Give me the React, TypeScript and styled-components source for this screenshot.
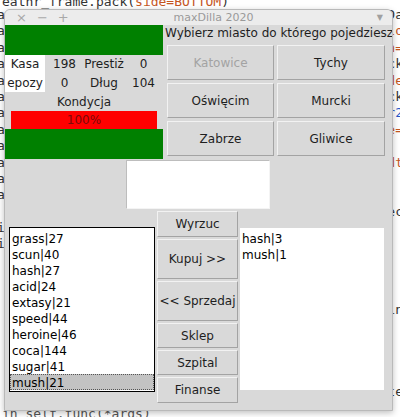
import styled, { createGlobalStyle } from "styled-components";

const GlobalStyle = createGlobalStyle`
  html, body {
    margin: 0;
    padding: 0;
    background: #ffffff;
  }
  body {
    font-family: "DejaVu Sans", "Liberation Sans", sans-serif;
  }
`;

const drugs = [
  "grass|27",
  "scun|40",
  "hash|27",
  "acid|24",
  "extasy|21",
  "speed|44",
  "heroine|46",
  "coca|144",
  "sugar|41",
  "mush|21",
];

const owned = ["hash|3", "mush|1"];

const cities = [
  { name: "Katowice", disabled: true },
  { name: "Tychy" },
  { name: "Oświęcim" },
  { name: "Murcki" },
  { name: "Zabrze" },
  { name: "Gliwice" },
];

// tekst edytora za oknem: [lewy fragment, prawy fragment, kolor prawego]
const editorLines: [string, string, string][] = [
  ["a", "Da", "#333"],
  ["a", "lo", "#c5561f"],
  ["a", "n=", "#c5561f"],
  ["a", "ck", "#333"],
  ["a", "de", "#c5561f"],
  ["a", "ck", "#333"],
  ["a", "r2", "#2456c7"],
  ["a", "e=", "#c5561f"],
  ["a", "", "#333"],
  ["a", "dt", "#c5561f"],
  ["a", "", "#333"],
  ["a", "", "#333"],
  ["", "ec", "#333"],
  ["i", "", "#333"],
  ["i", "", "#333"],
  ["", "", "#333"],
  ["", "", "#333"],
  ["", "", "#333"],
  ["", "in", "#333"],
  ["", "", "#333"],
  ["", "", "#333"],
  ["", "", "#333"],
  ["", "", "#333"],
  ["", "te", "#333"],
];

const App = () => {
  return (
    <>
      <GlobalStyle />
      <Desktop>
        <Editor>
          <TopCode>
            eathr_frame.pack(<Orange>side=BOTTOM</Orange>)
          </TopCode>
          {editorLines.map(([left, right, color], i) => (
            <CodeLine key={i}>
              <span>{left}</span>
              <CodeRight $color={color}>{right}</CodeRight>
            </CodeLine>
          ))}
          <BottomCode>in self.func(*args)</BottomCode>
        </Editor>

        <Window>
          <TitleBar>
            <TitleControls>
              <span>×</span>
              <span>−</span>
              <span>+</span>
            </TitleControls>
            <Title>maxDilla 2020</Title>
            <TitleMenu>▼</TitleMenu>
          </TitleBar>

          <Content>
            <TopSection>
              <StatusColumn>
                <GreenBar />
                <StatsGrid>
                  <WhiteLabel>Kasa</WhiteLabel>
                  <Cell>198</Cell>
                  <Cell>Prestiż</Cell>
                  <Cell>0</Cell>
                  <WhiteLabel>epozy</WhiteLabel>
                  <Cell>0</Cell>
                  <Cell>Dług</Cell>
                  <Cell>104</Cell>
                </StatsGrid>
                <ConditionLabel>Kondycja</ConditionLabel>
                <ConditionBar>100%</ConditionBar>
                <GreenBar />
              </StatusColumn>

              <TravelColumn>
                <TravelLabel>Wybierz miasto do którego pojedziesz</TravelLabel>
                <CityGrid>
                  {cities.map((c) => (
                    <CityButton key={c.name} $disabled={c.disabled}>
                      {c.name}
                    </CityButton>
                  ))}
                </CityGrid>
              </TravelColumn>
            </TopSection>

            <MessageBox />

            <MarketSection>
              <MarketList>
                {drugs.map((d, i) => (
                  <ListItem key={d} $selected={i === drugs.length - 1}>
                    {d}
                  </ListItem>
                ))}
              </MarketList>

              <ActionColumn>
                <ActionButton $height={26}>Wyrzuc</ActionButton>
                <ActionButton $height={40}>Kupuj &gt;&gt;</ActionButton>
                <ActionButton $height={40}>&lt;&lt; Sprzedaj</ActionButton>
                <ActionButton $height={25}>Sklep</ActionButton>
                <ActionButton $height={25}>Szpital</ActionButton>
                <ActionButton $height={26}>Finanse</ActionButton>
              </ActionColumn>

              <InventoryList>
                {owned.map((d) => (
                  <ListItem key={d}>{d}</ListItem>
                ))}
              </InventoryList>
            </MarketSection>
          </Content>
        </Window>
      </Desktop>
    </>
  );
};

// tło - edytor
const Desktop = styled.div`
  position: relative;
  width: 400px;
  height: 417px;
  overflow: hidden;
  background: #ffffff;
`;

const Editor = styled.div`
  display: flex;
  flex-direction: column;
  font-family: "DejaVu Sans Mono", "Liberation Mono", monospace;
  font-size: 13px;
  color: #333;
`;

const TopCode = styled.div`
  height: 10px;
  line-height: 10px;
  margin-top: -3px;
  padding-left: 2px;
  color: #333;
`;

const Orange = styled.span`
  color: #c5561f;
`;

const CodeLine = styled.div`
  display: flex;
  justify-content: space-between;
  height: 16.4px;
  line-height: 16.4px;
  padding: 0 0 0 1px;
  margin-left: -4px;
  margin-right: -3px;
  &:first-of-type {
    margin-top: 18px;
  }
`;

const CodeRight = styled.span<{ $color: string }>`
  color: ${(p) => p.$color};
`;

const BottomCode = styled.div`
  position: absolute;
  left: 2px;
  top: 406px;
  color: #555;
`;

// okno
const Window = styled.div`
  position: absolute;
  left: 4px;
  top: 9px;
  width: 387px;
  height: 400px;
  display: flex;
  flex-direction: column;
  background: #d9d9d9;
  border: 1px solid #b9b9b9;
  border-radius: 6px 6px 0 0;
  box-shadow: 0 2px 6px rgba(0, 0, 0, 0.25);
  overflow: hidden;
`;

const TitleBar = styled.div`
  height: 15px;
  flex-shrink: 0;
  display: flex;
  align-items: center;
  background: #ececec;
  color: #a0a0a0;
  font-size: 11px;
  position: relative;
`;

const TitleControls = styled.div`
  display: flex;
  gap: 10px;
  margin-left: 11px;
  font-size: 13px;
  color: #a8a8a8;
`;

const Title = styled.div`
  position: absolute;
  left: 0;
  right: 0;
  text-align: center;
  color: #9a9a9a;
  font-size: 11px;
  padding-left: 30px;
`;

const TitleMenu = styled.div`
  margin-left: auto;
  margin-right: 9px;
  font-size: 8px;
  color: #a0a0a0;
`;

const Content = styled.div`
  flex: 1;
  display: flex;
  flex-direction: column;
  font-size: 12px;
  color: #1e1e1e;
`;

const TopSection = styled.div`
  display: flex;
`;

const StatusColumn = styled.div`
  width: 158px;
  display: flex;
  flex-direction: column;
`;

const GreenBar = styled.div`
  height: 30px;
  background: #008000;
`;

const StatsGrid = styled.div`
  display: grid;
  grid-template-columns: 40px 39px 40px 39px;
  grid-auto-rows: 18.5px;
`;

const Cell = styled.div`
  display: flex;
  align-items: center;
  justify-content: center;
`;

const WhiteLabel = styled(Cell)`
  background: #ffffff;
`;

const ConditionLabel = styled.div`
  height: 19px;
  display: flex;
  align-items: center;
  justify-content: center;
`;

const ConditionBar = styled.div`
  height: 18px;
  margin: 0 6px;
  background: #ff0000;
  color: #7a0a0a;
  display: flex;
  align-items: center;
  justify-content: center;
`;

const TravelColumn = styled.div`
  flex: 1;
  display: flex;
  flex-direction: column;
`;

const TravelLabel = styled.div`
  height: 18px;
  line-height: 17px;
  padding-left: 2px;
  white-space: nowrap;
`;

const CityGrid = styled.div`
  display: grid;
  grid-template-columns: 107px 108px;
  grid-auto-rows: 35px;
  gap: 3px;
  margin: 2px 0 0 4px;
`;

const CityButton = styled.div<{ $disabled?: boolean }>`
  display: flex;
  align-items: center;
  justify-content: center;
  background: #d9d9d9;
  border: 1px solid;
  border-color: #f2f2f2 #a3a3a3 #a3a3a3 #f2f2f2;
  color: ${(p) => (p.$disabled ? "#a3a3a3" : "#1e1e1e")};
`;

const MessageBox = styled.div`
  align-self: center;
  width: 144px;
  height: 49px;
  margin-top: 1px;
  margin-left: -1px;
  box-sizing: border-box;
  background: #ffffff;
  border: 1px solid;
  border-color: #bdbdbd #f4f4f4 #f4f4f4 #bdbdbd;
`;

const MarketSection = styled.div`
  flex: 1;
  display: flex;
  align-items: center;
  padding: 0 0 1px 4px;
`;

const MarketList = styled.div`
  width: 146px;
  height: 165px;
  box-sizing: border-box;
  background: #ffffff;
  border: 1px solid #000000;
  padding: 2px 1px;
  display: flex;
  flex-direction: column;
`;

const InventoryList = styled.div`
  width: 144px;
  height: 162px;
  box-sizing: border-box;
  background: #ffffff;
  padding: 2px 1px;
  margin-left: 2px;
  display: flex;
  flex-direction: column;
`;

const ListItem = styled.div<{ $selected?: boolean }>`
  height: 16px;
  line-height: 16px;
  box-sizing: border-box;
  padding-left: 1px;
  color: #000;
  background: ${(p) => (p.$selected ? "#c3c3c3" : "transparent")};
  border: 1px dotted ${(p) => (p.$selected ? "#555" : "transparent")};
  margin: 0 -1px 0 -1px;
`;

const ActionColumn = styled.div`
  width: 81px;
  align-self: stretch;
  display: flex;
  flex-direction: column;
  gap: 2px;
  margin-left: 2px;
  padding-top: 2px;
`;

const ActionButton = styled.div<{ $height: number }>`
  height: ${(p) => p.$height}px;
  box-sizing: border-box;
  display: flex;
  align-items: center;
  justify-content: center;
  background: #d9d9d9;
  border: 1px solid;
  border-color: #f2f2f2 #a3a3a3 #a3a3a3 #f2f2f2;
  white-space: nowrap;
`;

export default App;
